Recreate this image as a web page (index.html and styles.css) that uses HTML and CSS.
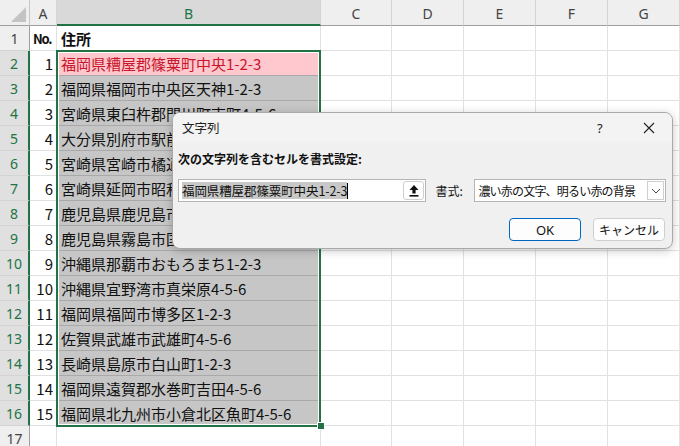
FILE: index.html
```html
<!DOCTYPE html>
<html lang="ja">
<head>
<meta charset="utf-8">
<link rel="stylesheet" href="styles.css">
</head>
<body>
<div class="app">
  <div class="sheet">
    <div class="corner"><span class="tri"></span></div>
    <div class="ch">A</div>
    <div class="ch sel">B</div>
    <div class="ch">C</div>
    <div class="ch">D</div>
    <div class="ch">E</div>
    <div class="ch">F</div>
    <div class="ch last">G</div>

    <div class="rh">1</div><div class="c b no">No.</div><div class="c b left">住所</div><div class="c"></div><div class="c"></div><div class="c"></div><div class="c"></div><div class="c"></div>

    <div class="rh sel">2</div><div class="c num">1</div><div class="c s pink">福岡県糟屋郡篠粟町中央1-2-3</div><div class="c"></div><div class="c"></div><div class="c"></div><div class="c"></div><div class="c"></div>
    <div class="rh sel">3</div><div class="c num">2</div><div class="c s">福岡県福岡市中央区天神1-2-3</div><div class="c"></div><div class="c"></div><div class="c"></div><div class="c"></div><div class="c"></div>
    <div class="rh sel">4</div><div class="c num">3</div><div class="c s">宮崎県東臼杵郡門川町南町4-5-6</div><div class="c"></div><div class="c"></div><div class="c"></div><div class="c"></div><div class="c"></div>
    <div class="rh sel">5</div><div class="c num">4</div><div class="c s">大分県別府市駅前町1-2-3</div><div class="c"></div><div class="c"></div><div class="c"></div><div class="c"></div><div class="c"></div>
    <div class="rh sel">6</div><div class="c num">5</div><div class="c s">宮崎県宮崎市橘通西4-5-6</div><div class="c"></div><div class="c"></div><div class="c"></div><div class="c"></div><div class="c"></div>
    <div class="rh sel">7</div><div class="c num">6</div><div class="c s">宮崎県延岡市昭和町1-2-3</div><div class="c"></div><div class="c"></div><div class="c"></div><div class="c"></div><div class="c"></div>
    <div class="rh sel">8</div><div class="c num">7</div><div class="c s">鹿児島県鹿児島市山下町4-5-6</div><div class="c"></div><div class="c"></div><div class="c"></div><div class="c"></div><div class="c"></div>
    <div class="rh sel">9</div><div class="c num">8</div><div class="c s">鹿児島県霧島市国分中央1-2-3</div><div class="c"></div><div class="c"></div><div class="c"></div><div class="c"></div><div class="c"></div>
    <div class="rh sel">10</div><div class="c num">9</div><div class="c s">沖縄県那覇市おもろまち1-2-3</div><div class="c"></div><div class="c"></div><div class="c"></div><div class="c"></div><div class="c"></div>
    <div class="rh sel">11</div><div class="c num">10</div><div class="c s">沖縄県宜野湾市真栄原4-5-6</div><div class="c"></div><div class="c"></div><div class="c"></div><div class="c"></div><div class="c"></div>
    <div class="rh sel">12</div><div class="c num">11</div><div class="c s">福岡県福岡市博多区1-2-3</div><div class="c"></div><div class="c"></div><div class="c"></div><div class="c"></div><div class="c"></div>
    <div class="rh sel">13</div><div class="c num">12</div><div class="c s">佐賀県武雄市武雄町4-5-6</div><div class="c"></div><div class="c"></div><div class="c"></div><div class="c"></div><div class="c"></div>
    <div class="rh sel">14</div><div class="c num">13</div><div class="c s">長崎県島原市白山町1-2-3</div><div class="c"></div><div class="c"></div><div class="c"></div><div class="c"></div><div class="c"></div>
    <div class="rh sel">15</div><div class="c num">14</div><div class="c s">福岡県遠賀郡水巻町吉田4-5-6</div><div class="c"></div><div class="c"></div><div class="c"></div><div class="c"></div><div class="c"></div>
    <div class="rh sel">16</div><div class="c num">15</div><div class="c s">福岡県北九州市小倉北区魚町4-5-6</div><div class="c"></div><div class="c"></div><div class="c"></div><div class="c"></div><div class="c"></div>
    <div class="rh">17</div><div class="c"></div><div class="c"></div><div class="c"></div><div class="c"></div><div class="c"></div><div class="c"></div><div class="c"></div>
  </div>

  <div class="selection"><span class="inner"></span></div>
  <div class="handle"></div>

  <div class="dialog">
    <div class="titlebar">
      <span class="title">文字列</span>
      <span class="help">?</span>
      <svg class="close" width="12" height="12" viewBox="0 0 12 12"><path d="M1 1L11 11M11 1L1 11" stroke="#222" stroke-width="1.1" fill="none"/></svg>
    </div>
    <div class="body">
      <div class="label">次の文字列を含むセルを書式設定:</div>
      <div class="inrow">
        <div class="textbox">
          <span class="seltext">福岡県糟屋郡篠粟町中央1-2-3</span><span class="caret"></span>
          <span class="refbtn"><svg width="12" height="13" viewBox="0 0 12 13"><path d="M6 1L10.5 6H7.6V9.5H4.4V6H1.5Z" fill="#111"/><rect x="1.5" y="11" width="9" height="1.6" fill="#111"/></svg></span>
        </div>
        <span class="fmtlabel">書式:</span>
        <div class="select">
          <span class="seltxt">濃い赤の文字、明るい赤の背景</span>
          <span class="dd"><svg width="10" height="6" viewBox="0 0 10 6"><path d="M1 1L5 5L9 1" stroke="#444" stroke-width="1" fill="none"/></svg></span>
        </div>
      </div>
      <div class="btnrow">
        <button class="btn ok">OK</button>
        <button class="btn">キャンセル</button>
      </div>
    </div>
  </div>
</div>
</body>
</html>
```

FILE: styles.css
```css
* { box-sizing: border-box; }
html, body { margin: 0; padding: 0; background: #fff; }
body { font-family: "Noto Sans CJK JP", "Noto Sans", sans-serif; overflow: hidden; }
.app { position: relative; width: 680px; height: 446px; overflow: hidden; }

.sheet {
  display: grid;
  grid-template-columns: 30px 27px 264px 71px 72px 72px 72px 72px;
  grid-template-rows: 26px repeat(17, 25px);
}
.corner {
  position: relative;
  background: #efefef;
  border-right: 1px solid #c8c8c8;
  border-bottom: 1px solid #9e9e9e;
}
.tri {
  position: absolute; right: 3px; bottom: 3px;
  width: 0; height: 0;
  border-left: 15px solid transparent;
  border-bottom: 15px solid #c4c4c4;
}
.ch {
  background: #efefef;
  border-right: 1px solid #d4d4d4;
  border-bottom: 1px solid #9e9e9e;
  display: flex; align-items: center; justify-content: center;
  font-family: "Noto Sans", "Open Sans", sans-serif;
  font-size: 14px; color: #444;
  padding-top: 1px;
}
.ch.sel { background: #d9d9d9; color: #217346; border-bottom: 2px solid #217346; padding-top: 2px; }
.rh {
  background: #efefef;
  border-right: 1px solid #9e9e9e;
  border-bottom: 1px solid #d4d4d4;
  display: flex; align-items: center; justify-content: center;
  font-family: "Noto Sans", "Open Sans", sans-serif;
  font-size: 14px; color: #444;
}
.rh.sel { background: #e0e0e0; color: #217346; border-right: 2px solid #217346; }
.c {
  border-right: 1px solid #e1e1e1;
  border-bottom: 1px solid #e1e1e1;
  font-size: 15px; color: #111;
  display: flex; align-items: center;
  white-space: nowrap; overflow: visible;
  padding: 0 2px; line-height: 1;
}
.c.b { font-weight: bold; padding-left: 4px; }
.c.no { font-size: 13px; letter-spacing: -1.2px; padding-left: 3px; overflow: hidden; }
.c.num { justify-content: flex-end; padding-right: 3px; }
.c.s { background: #c6c6c6; border-right-color: #a9a9a9; border-bottom-color: #a9a9a9; padding-left: 4px; position: relative; z-index: 1; }
.c.pink { background: #ffc7ce; color: #c8162a; }

.selection {
  position: absolute; left: 56px; top: 50px; width: 265px; height: 377px;
  border: 2px solid #217346; z-index: 2;
}
.selection .inner { position: absolute; inset: 0; border: 1px solid #fff; }
.handle {
  position: absolute; left: 317px; top: 422px; width: 8px; height: 8px;
  background: #217346; border: 1px solid #fff; z-index: 3;
}

.dialog {
  position: absolute; left: 172px; top: 112px; width: 501px; height: 137px;
  background: #f0f0f0; border: 1px solid #a8a8a8; border-radius: 8px;
  box-shadow: 0 2px 10px rgba(0,0,0,0.22);
  z-index: 5; overflow: hidden;
  font-size: 12px; color: #111;
}
.titlebar {
  height: 29px; background: #f3f3f3;
  display: flex; align-items: center;
  padding: 0 0 0 9px;
}
.title { font-size: 12.5px; flex: 1; color: #222; }
.help { font-family: "Noto Sans", sans-serif; font-size: 13px; width: 14px; margin-right: 32px; color: #222; }
.close { margin-right: 17px; }
.body { padding: 9px 6px 0 5px; }
.label { font-weight: bold; font-size: 12px; line-height: 16px; height: 16px; }
.inrow { display: flex; align-items: center; margin-top: 12px; height: 23px; }
.textbox {
  width: 249px; height: 23px; background: #fff; border: 1px solid #b5b5b5;
  display: flex; align-items: center; padding-left: 3px; position: relative;
}
.seltext { background: #c8c8c8; font-size: 12.5px; line-height: 17px; letter-spacing: -0.1px; }
.caret { width: 1px; height: 16px; background: #000; }
.refbtn {
  position: absolute; right: 1px; top: 1px; width: 21px; height: 19px;
  background: #fff; border: 1px solid #cfcfcf; border-radius: 3px;
  display: flex; align-items: center; justify-content: center;
}
.fmtlabel { margin-left: 9px; width: 39px; font-size: 12px; }
.select {
  width: 192px; height: 23px; background: #fff; border: 1px solid #b5b5b5;
  display: flex; align-items: center; padding-left: 3px; position: relative;
}
.seltxt { flex: 1; font-size: 12px; letter-spacing: -0.8px; }
.dd {
  width: 17px; height: 19px; margin-right: 1px; border: 1px solid #cfcfcf;
  display: flex; align-items: center; justify-content: center; background: #fff;
}
.btnrow { display: flex; justify-content: flex-end; gap: 12px; margin-top: 16px; padding-right: 1px; }
.btn {
  width: 72px; height: 23px; background: #fdfdfd; border: 1px solid #cfcfcf; border-radius: 4px;
  font-family: "Noto Sans CJK JP", sans-serif; font-size: 12px; color: #111; padding: 0;
}
.btn.ok { border: 1px solid #0067c0; font-family: "Noto Sans", sans-serif; font-size: 13px; }
```
